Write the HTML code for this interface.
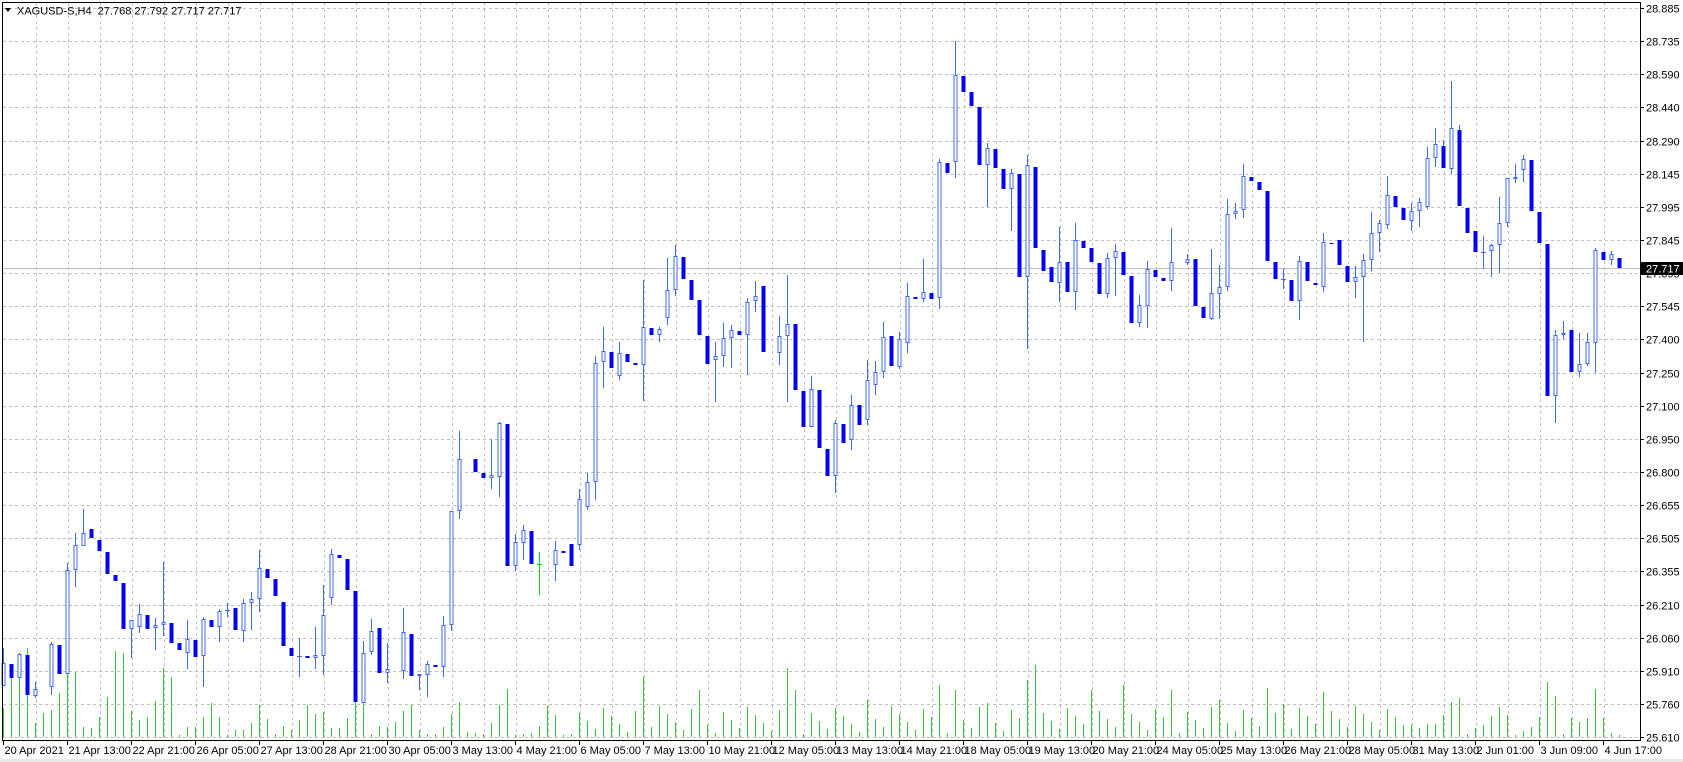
<!DOCTYPE html>
<html><head><meta charset="utf-8">
<style>
html,body{margin:0;padding:0;background:#fff;width:1683px;height:762px;overflow:hidden}
svg{display:block}
text{font-family:"Liberation Sans",sans-serif;font-size:11px;fill:#000}
</style></head>
<body>
<svg id="c" width="1683" height="762" xmlns="http://www.w3.org/2000/svg">
<rect x="0" y="0" width="1683" height="762" fill="#fff"/>
<g id="grid"></g>
<line x1="3" y1="268.5" x2="1640" y2="268.5" stroke="#c0c0c0" stroke-width="1"/>
<g id="vol"></g>
<g id="cnd"></g>
<line x1="2" y1="2.5" x2="1641" y2="2.5" stroke="#000"/>
<line x1="2.5" y1="2" x2="2.5" y2="741" stroke="#000"/>
<line x1="1640.5" y1="2" x2="1640.5" y2="741" stroke="#000"/>
<line x1="2" y1="740.5" x2="1641" y2="740.5" stroke="#000"/>
<rect x="0" y="759" width="1683" height="3" fill="#e8e8e8"/>
<g id="ax"></g>
<rect x="1641" y="262" width="42" height="13" fill="#000"/>
<text x="1646" y="272.5" style="fill:#fff">27.717</text>
<polygon points="5,8 11,8 8,12" fill="#000"/>
<text x="17" y="14.5">XAGUSD-S,H4&#160;&#160;27.768 27.792 27.717 27.717</text>
</svg>
<script>
(function(){
var NS="http://www.w3.org/2000/svg";
function el(p,t,a,txt){var e=document.createElementNS(NS,t);for(var k in a)e.setAttribute(k,a[k]);if(txt!=null)e.textContent=txt;p.appendChild(e);return e;}
var g=document.getElementById('grid');
for(var j=0;j<=49;j++){var x=36+32*j+0.5;el(g,'line',{x1:x,y1:3,x2:x,y2:740,stroke:'#c0c0c0','stroke-dasharray':'3,3'});}
var prices=["28.885","28.735","28.590","28.440","28.290","28.145","27.995","27.845","27.695","27.545","27.400","27.250","27.100","26.950","26.800","26.655","26.505","26.355","26.210","26.060","25.910","25.760","25.610"];
var ax=document.getElementById('ax');
for(var i=0;i<23;i++){var y=Math.round(8+33.14*i)+0.5;el(g,'line',{x1:3,y1:y,x2:1640,y2:y,stroke:'#c0c0c0','stroke-dasharray':'3,3'});
el(ax,'line',{x1:1640,y1:y,x2:1644,y2:y,stroke:'#000'});
el(ax,'text',{x:1646,y:y+4},prices[i]);}
var xl=["20 Apr 2021","21 Apr 13:00","22 Apr 21:00","26 Apr 05:00","27 Apr 13:00","28 Apr 21:00","30 Apr 05:00","3 May 13:00","4 May 21:00","6 May 05:00","7 May 13:00","10 May 21:00","12 May 05:00","13 May 13:00","14 May 21:00","18 May 05:00","19 May 13:00","20 May 21:00","24 May 05:00","25 May 13:00","26 May 21:00","28 May 05:00","31 May 13:00","2 Jun 01:00","3 Jun 09:00","4 Jun 17:00"];
for(var i=0;i<xl.length;i++){var x=3+64*i+0.5;el(ax,'line',{x1:x,y1:741,x2:x,y2:745,stroke:'#000'});el(ax,'text',{x:x+1,y:754},xl[i]);}
var D=[[686,663,648,686],[664,678,0,0],[678,654,653,0],[655,695,0,0],[696,689,682,698],null,[687,644,642,695],[645,674,0,0],[674,570,563,0],[570,545,533,587],
[546,533,509,0],[529,538,0,0],[540,551,0,0],[552,574,0,0],[575,581,0,0],[583,629,0,0],[629,620,0,658],[627,614,604,633],[615,629,0,0],[628,625,618,650],
[625,622,562,636],[623,643,0,0],[643,650,0,0],[653,639,620,669],[640,657,0,0],[656,619,617,687],[620,627,0,0],[627,611,609,642],[610,610,603,617],[608,630,0,0],
[631,603,599,642],[603,599,592,630],[599,568,550,612],[569,578,0,0],[579,596,0,0],[602,646,0,0],[648,656,0,0],[656,656,638,677],[656,658,0,0],[658,655,627,669],
[656,615,585,675],[598,554,549,605],[555,558,0,0],[559,590,0,0],[591,702,0,0],[703,653,641,0],[652,631,619,655],[628,673,0,0],[673,669,643,683],null,
[671,632,608,679],[634,676,0,0],[676,674,0,690],[675,664,661,697],[665,667,0,0],[667,625,616,677],[625,511,0,631],[511,459,431,519],null,[459,472,0,0],
[473,478,0,0],[478,475,439,489],[477,423,422,497],[424,566,0,0],[566,542,534,571],[543,530,525,560],[531,564,0,0],[564,564,552,595,'g'],null,[565,550,541,581],
[551,553,0,0],[544,566,0,0],[545,499,489,550],[507,482,473,510],[482,363,356,500],[362,351,327,388],[352,368,0,0],[376,353,342,380],[354,362,0,0],[363,365,0,0],
[365,327,280,401],[328,335,0,0],[335,329,327,342],[318,290,258,325],[290,256,245,296],[257,279,0,0],[280,300,0,0],[300,335,0,0],[336,364,0,0],[360,356,342,402],
[356,338,323,367],[338,330,325,368],[331,335,0,0],[335,302,298,375],[301,296,281,312],[286,352,0,0],null,[353,336,316,365],[336,324,275,402],[324,390,0,0],
[391,427,0,0],[427,389,376,427],[390,448,0,0],[449,476,0,0],[476,423,420,493],[424,443,0,0],[440,405,395,450],[405,425,0,0],[420,380,360,425],[385,372,361,395],
[372,337,322,378],[336,366,0,0],[367,339,332,369],[343,296,283,353],[297,299,0,0],[299,292,259,302],[293,299,0,0],[298,162,159,309],[163,173,0,0],[162,75,41,178],
[76,92,0,0],[92,106,0,0],[107,165,0,0],[165,148,143,207],[149,168,0,0],[169,189,0,0],[189,173,169,231],[174,277,0,0],[277,165,155,349],[167,248,0,0],
[250,271,0,0],[267,282,0,0],[283,262,227,302],[262,292,0,0],[292,240,223,310],[241,248,0,0],[248,262,0,0],[263,294,0,0],[294,258,253,298],[258,251,244,296],
[252,275,0,0],[276,323,0,0],[323,305,295,327],[306,269,261,328],[270,277,0,0],[278,281,0,0],[281,262,228,291],null,[263,259,254,265],[259,306,0,0],
[307,318,0,0],[319,293,249,320],[294,287,265,319],[287,214,199,291],[214,211,203,219],[210,176,164,218],[177,181,0,0],[182,190,0,0],[191,261,0,0],[262,279,0,0],
[279,279,269,289],[280,301,0,0],[301,261,256,320],[262,281,0,0],[283,285,0,0],[287,242,233,292],[243,244,0,0],[240,265,0,0],[266,282,0,0],[282,277,266,298],
[277,260,254,342],[260,233,212,271],[233,223,220,252],[225,195,176,229],[196,207,0,0],[208,220,0,0],[221,211,203,231],[211,202,198,227],[207,158,147,209],[158,144,128,167],
[146,168,140,0],[169,128,81,174],[130,206,125,0],[208,233,0,0],[231,252,0,0],[252,252,236,269],[251,245,244,277],[245,223,197,273],[223,178,0,227],[179,177,164,183],
[170,159,155,182],[160,211,0,0],[212,243,0,0],[244,396,0,0],[396,335,330,423],[335,333,321,339],[330,372,0,0],[372,364,333,377],[364,342,333,366],[343,250,248,373],
[252,260,0,0],[260,254,251,265],[258,268,0,0]];
var V=[708,678,664,648,723,713,710,693,671,672,727,728,717,697,651,653,711,720,717,701,668,677,735,727,727,717,703,717,735,730,730,723,705,719,734,
726,730,720,705,714,712,728,728,718,698,700,734,726,727,722,711,705,730,734,734,727,714,702,732,733,734,723,705,689,735,734,733,726,706,715,735];
var spikes={80:677,87:690,98:668,99:690,117:685,119:690,128:680,129:665,136:690,140:685,146:690,152:700,158:688,165:692,108:700,123:703,160:704};
for(var k=71;k<175;k++){var s=(k*37+11)%29;V[k]=spikes[k]||(706+s);}
var T=[725,725,728,724,724,715,702,698,734,728,725,716,707,715,735,731,727,717,682,696,734,718,722,718,689,718,733,735];
for(var i=0;i<T.length;i++)V[175+i]=T[i];
var vg=document.getElementById('vol'),cg=document.getElementById('cnd');
for(var k=0;k<D.length;k++){var cx=3+8*k+0.5;
 if(V[k])el(vg,'line',{x1:cx,y1:737,x2:cx,y2:V[k],stroke:'#32c832','stroke-width':1});
 var d=D[k];if(!d)continue;
 var o=d[0],c=d[1],tp=Math.min(o,c),bt=Math.max(o,c),hh=d[2]||tp,ll=d[3]||bt;
 var up=c<o,col=d[4]=='g'?'#00e000':(up||o==c?'#4169e1':'#0000ff');
 var wc=d[4]=='g'?col:'#4169e1';
 if(hh<tp)el(cg,'line',{x1:cx,y1:hh,x2:cx,y2:tp,stroke:wc});
 if(ll>bt)el(cg,'line',{x1:cx,y1:bt,x2:cx,y2:ll,stroke:wc});
 if(o==c){el(cg,'line',{x1:cx-2.5,y1:o+0.5,x2:cx+2.5,y2:o+0.5,stroke:col});}
 else if(up){el(cg,'rect',{x:cx-1.5,y:tp+0.5,width:3,height:Math.max(bt-tp-1,1),fill:'#fff',stroke:'#4169e1','stroke-width':1});}
 else{el(cg,'rect',{x:cx-2,y:tp,width:4,height:Math.max(bt-tp,1),fill:'#0000ff'});}
}
})();
</script>
</body></html>
